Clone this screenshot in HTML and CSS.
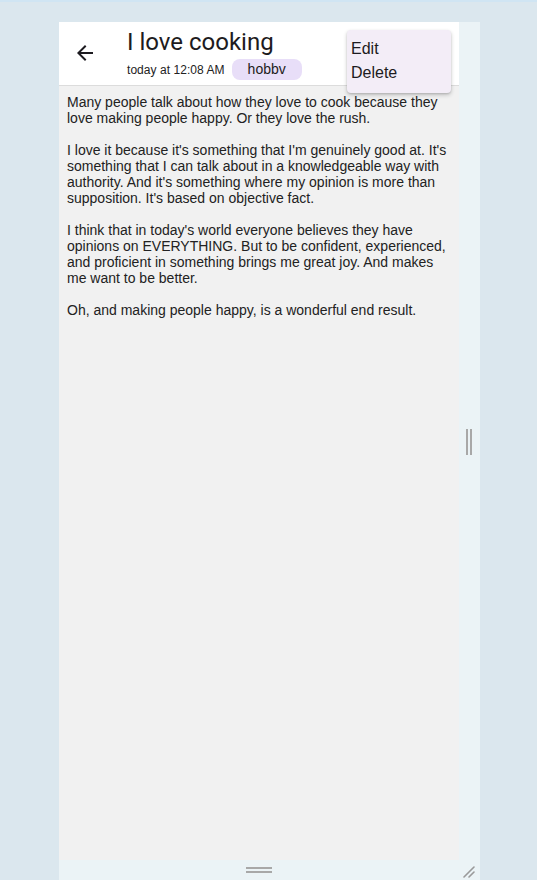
FILE: index.html
```html
<!DOCTYPE html>
<html>
<head>
<meta charset="utf-8">
<link rel="stylesheet" href="styles.css">
</head>
<body>
<div class="frame">
  <div class="panel">
    <div class="card">
      <header class="header">
        <button class="back" aria-label="Back">
          <svg width="24" height="24" viewBox="0 0 24 24"><path d="M20 11H7.83l5.59-5.59L12 4l-8 8 8 8 1.41-1.41L7.83 13H20v-2z" fill="#1d1b20"/></svg>
        </button>
        <div class="titles">
          <h1 class="title">I love cooking</h1>
          <div class="meta">
            <span class="time">today at 12:08 AM</span>
            <span class="chip">hobbv</span>
          </div>
        </div>
      </header>
      <div class="content">Many people talk about how they love to cook because they love making people happy. Or they love the rush.

I love it because it's something that I'm genuinely good at. It's something that I can talk about in a knowledgeable way with authority. And it's something where my opinion is more than supposition. It's based on objective fact.

I think that in today's world everyone believes they have opinions on EVERYTHING. But to be confident, experienced, and proficient in something brings me great joy. And makes me want to be better.

Oh, and making people happy, is a wonderful end result.</div>
      <div class="menu">
        <div class="menu-item">Edit</div>
        <div class="menu-item">Delete</div>
      </div>
    </div>
    <div class="side-handle"><span></span><span></span></div>
    <div class="bottom-handle"><span></span><span></span></div>
    <div class="grip">
      <svg width="14" height="14" viewBox="0 0 14 14"><path d="M2 13L12 3M7 13L12 8" stroke="#9a9a9a" stroke-width="1.6" stroke-linecap="round"/></svg>
    </div>
  </div>
</div>
</body>
</html>
```

FILE: styles.css
```css
html, body {
  margin: 0;
  padding: 0;
}
body {
  background: #dbe7ee;
  border-top: 2px solid #d0e5f3;
  height: 878px;
  overflow: hidden;
  font-family: "Liberation Sans", Arial, sans-serif;
}
.frame {
  padding: 20px 0 0 59px;
}
.panel {
  width: 421px;
  height: 858px;
  background: #ebf3f6;
  display: grid;
  grid-template-columns: 400px 21px;
  grid-template-rows: 838px 20px;
}
.card {
  position: relative;
  display: flex;
  flex-direction: column;
  background: #f1f1f1;
}
.header {
  height: 63px;
  background: #ffffff;
  border-bottom: 1px solid #dcdcdc;
  display: flex;
  align-items: flex-start;
}
.back {
  border: 0;
  background: none;
  padding: 0;
  margin: 19px 0 0 14px;
  width: 24px;
  height: 24px;
  cursor: pointer;
}
.back svg { display: block; }
.titles {
  margin-left: 30px;
  padding-top: 5px;
}
.title {
  margin: 0;
  font-family: Roboto, "Liberation Sans", sans-serif;
  font-weight: 400;
  font-size: 24px;
  line-height: 30px;
  color: #1d1b20;
}
.meta {
  display: flex;
  align-items: center;
  gap: 7px;
  margin-top: 2px;
}
.time {
  font-size: 12px;
  color: #222;
  letter-spacing: 0.05px;
}
.chip {
  background: #e8def8;
  border-radius: 8px;
  padding: 0 16px 0 16px;
  height: 21px;
  line-height: 21px;
  font-size: 14px;
  color: #1d1b20;
}
.content {
  flex: 1;
  padding: 8px 8px;
  font-size: 14px;
  line-height: 16px;
  color: #222;
  white-space: pre-wrap;
}
.menu {
  position: absolute;
  top: 8px;
  left: 288px;
  width: 96px;
  padding: 7px 4px 8px 4px;
  background: #f3edf7;
  border-radius: 4px;
  box-shadow: 0 2px 4px rgba(0,0,0,0.2), 0 1px 2px rgba(0,0,0,0.12);
}
.menu-item {
  font-size: 16px;
  line-height: 24px;
  color: #1d1b20;
}
.side-handle {
  display: flex;
  justify-content: center;
  align-items: center;
  gap: 2px;
  padding-right: 1px;
  padding-top: 2px;
}
.side-handle span {
  width: 2px;
  height: 26px;
  background: #a8a8a8;
}
.bottom-handle {
  display: flex;
  flex-direction: column;
  align-items: center;
  justify-content: center;
  gap: 2px;
}
.bottom-handle span {
  width: 26px;
  height: 2px;
  background: #a8a8a8;
}
.grip {
  display: flex;
  align-items: flex-end;
  justify-content: flex-start;
  padding: 0 0 2px 3px;
}
.grip svg { display: block; }
```
